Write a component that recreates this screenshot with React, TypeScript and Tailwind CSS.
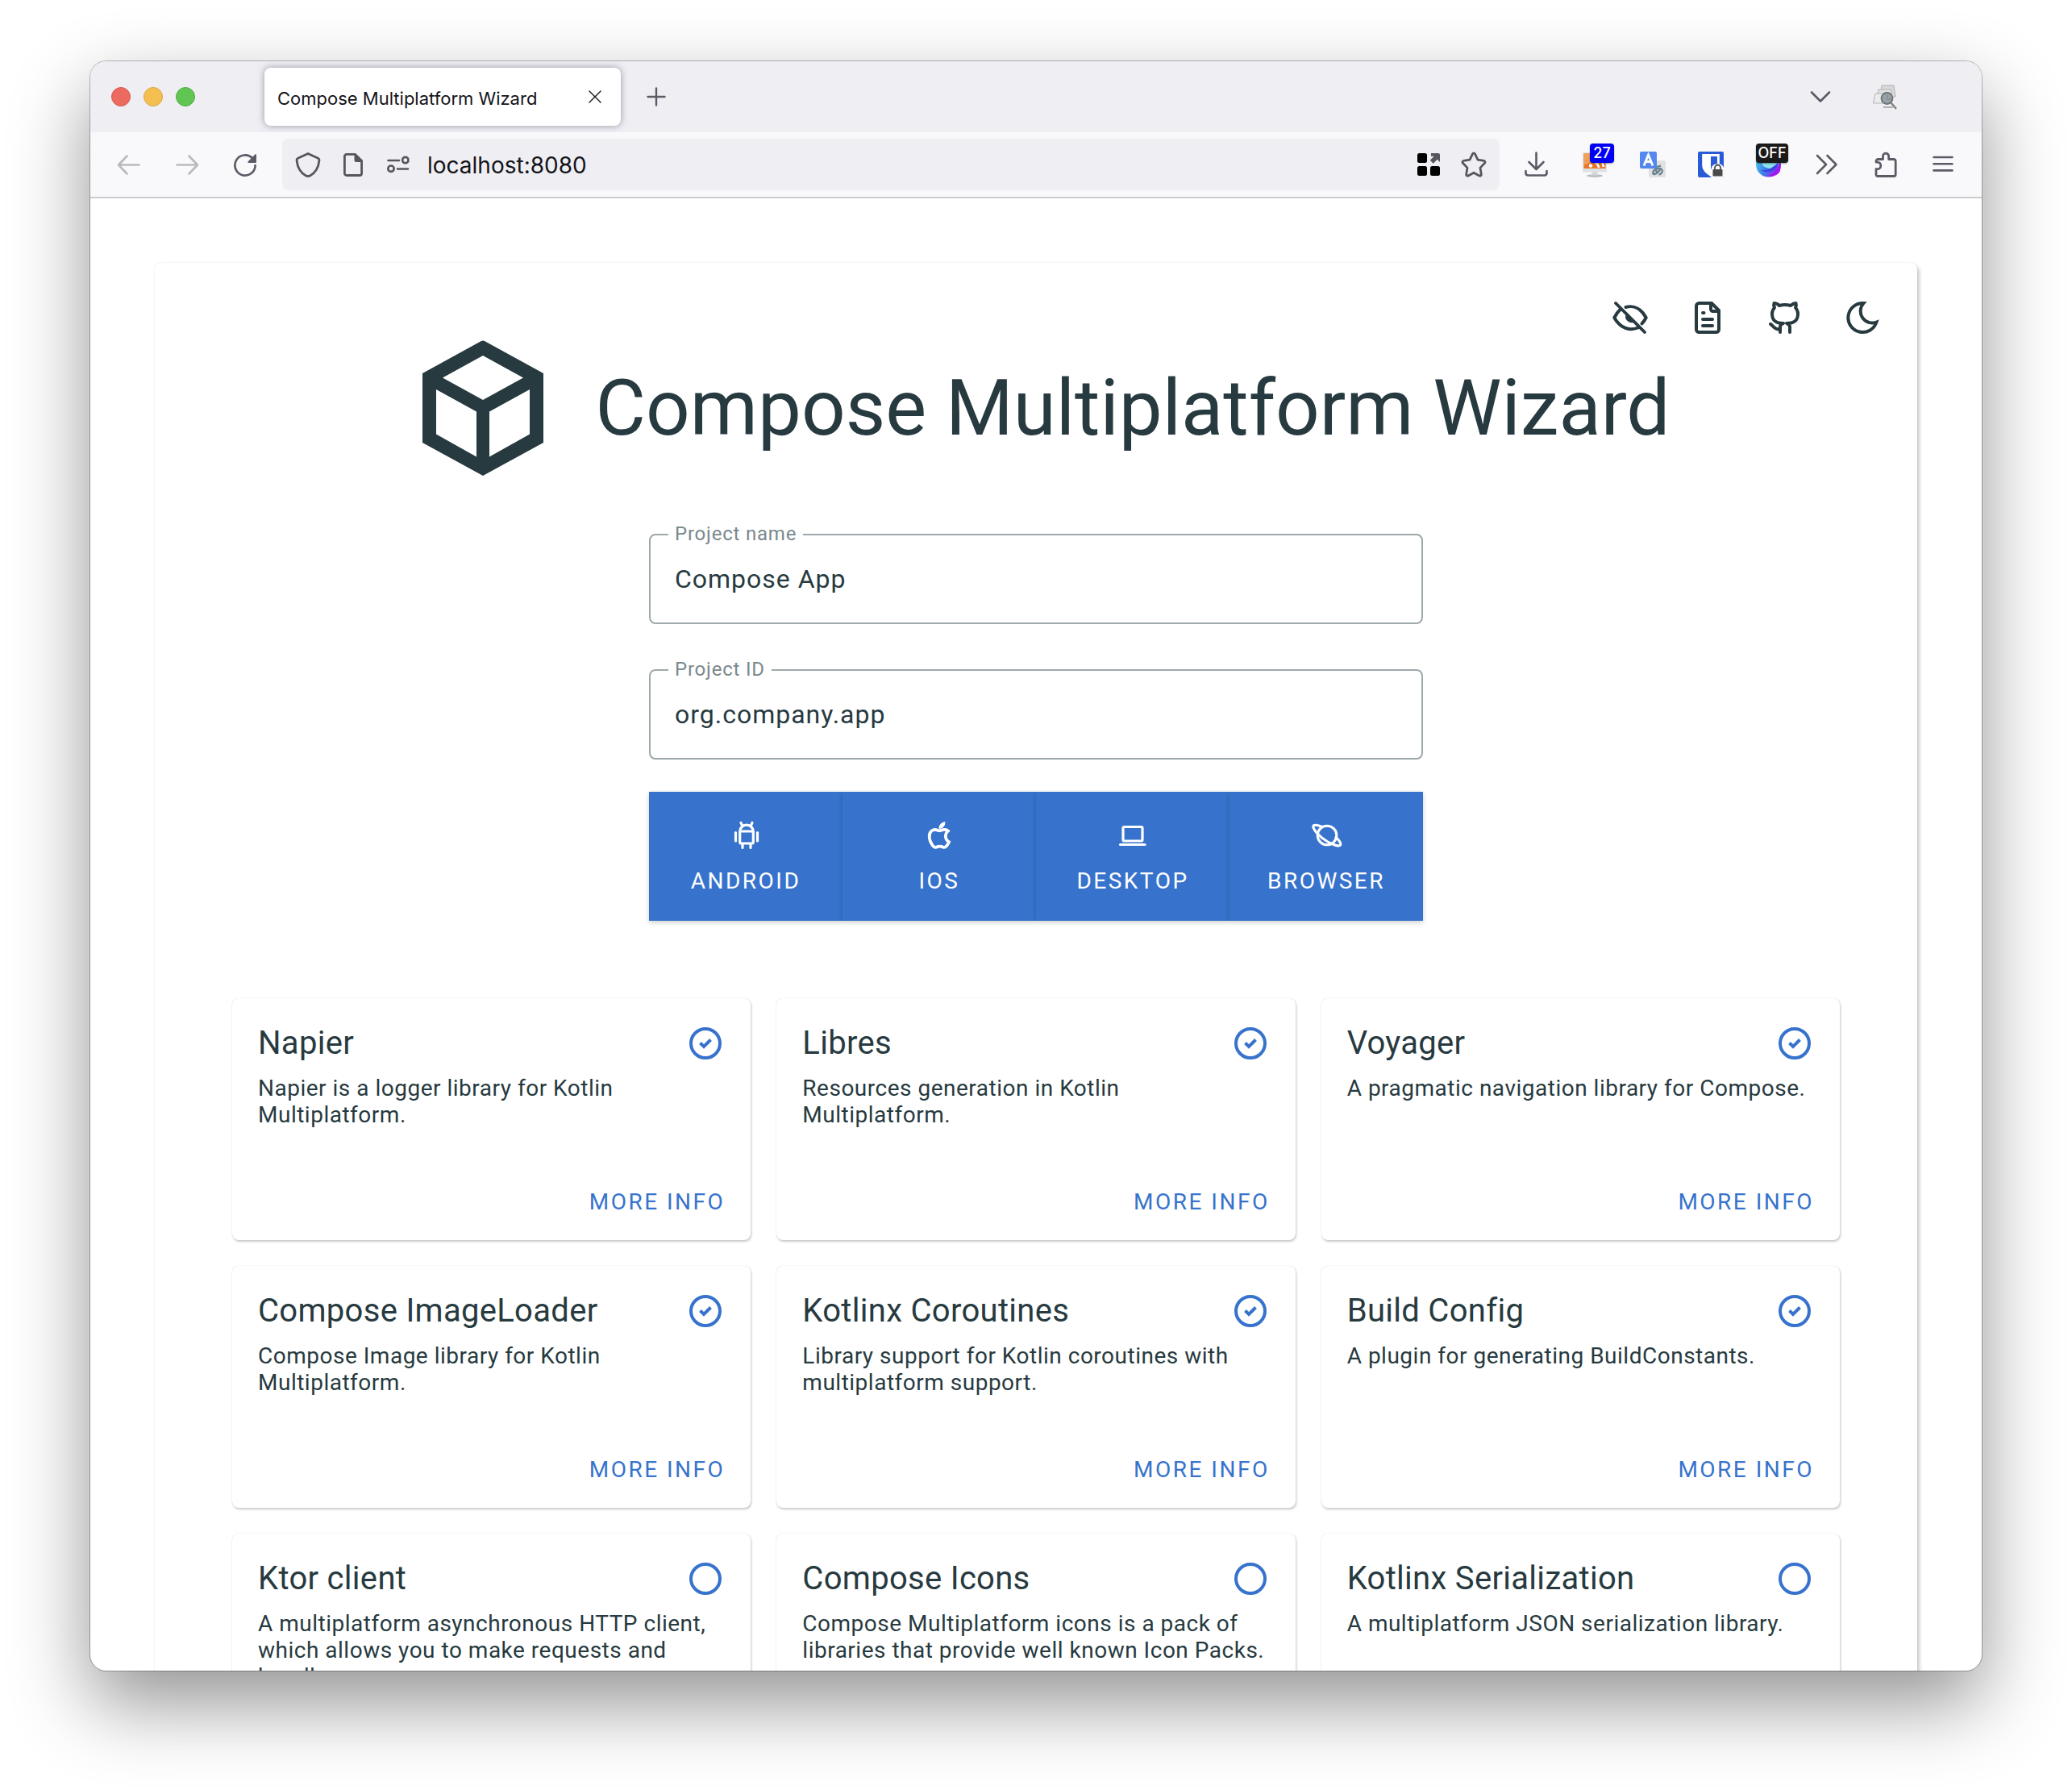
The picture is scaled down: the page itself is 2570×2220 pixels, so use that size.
import React, { useState } from "react";
import { AiOutlineApple } from "react-icons/ai";

type IconProps = { className?: string };

/* ---------- browser chrome icons ---------- */

function Stroke({ d, className = "size-8", width = 2.6 }: { d: string; className?: string; width?: number }) {
  return (
    <svg viewBox="0 0 32 32" className={className} fill="none" stroke="currentColor" strokeWidth={width} strokeLinecap="round" strokeLinejoin="round" aria-hidden="true">
      <path d={d} />
    </svg>
  );
}

const BackIcon = () => <Stroke d="M28.500 16.500H3M13.500 5.500 3 16.500l10.500 11" />;
const ForwardIcon = () => <Stroke d="M3.500 16.500H29M18.500 5.500l10.500 11-10.500 11" />;
const CloseIcon = () => <Stroke className="size-4" width={2.8} d="M2 2l28 28M30 2 2 30" />;
const PlusIcon = () => <Stroke className="size-6" width={3.2} d="M16 2v28M2 16h28" />;
const ChevronIcon = () => <Stroke d="M5 10.500l11 11 11-11" />;
const ShieldIcon = () => <Stroke width={2.8} d="M16 2.500 3.500 8.200c-1 .5-1.600 1.400-1.500 2.500C2.800 19 6 26 13.500 29.900c1.600.8 3.400.8 5 0C26 26 29.200 19 30 10.700c.1-1.100-.5-2-1.500-2.500Z" />;
const StarIcon = () => <Stroke width={2.8} d="M14.500 2.800c.6-1.200 2.400-1.200 3 0l3.500 7.400 7.600 1.200c1.400.2 1.900 1.900.9 2.900L24 20.100l1.300 8.200c.2 1.400-1.100 2.300-2.400 1.700L16 26.200 9.100 30c-1.200.6-2.600-.3-2.400-1.700L8 20.100l-5.500-5.800c-1-1-.5-2.700.9-2.900L11 10.200Z" />;
const DownloadIcon = () => <Stroke width={2.6} d="M15.500 1.500v20M6.500 13l9 9 9-9M2.500 24v2.500c0 1.700 1.300 3 3 3h20c1.700 0 3-1.300 3-3V24" />;
const MoreToolsIcon = () => <Stroke width={2.600} d="M4 5l11 11L4 27M16.500 5l11 11-11 11" />;
const MenuIcon = () => <Stroke width={2.6} d="M4.500 7h23M4.500 15.200h23M4.500 23.400h23" />;
const PuzzleIcon = () => <Stroke width={2.8} d="M5 28.500v-6.800h1.500a4.300 4.300 0 0 0 0-8.600H5V12a2.500 2.500 0 0 1 2.500-2.500h6V5.800a3.600 3.600 0 0 1 7.200 0v3.700h6A2.500 2.500 0 0 1 29.200 12v16.500a2 2 0 0 1-2 2H7a2 2 0 0 1-2-2Z" />;

function ReloadIcon() {
  return (
    <svg viewBox="0 0 32 32" className="size-8" aria-hidden="true">
      <path d="M25 8.200A12.600 12.600 0 1 0 28.600 17" fill="none" stroke="currentColor" strokeWidth="2.700" strokeLinecap="round" />
      <path d="M30 4.200V13a1 1 0 0 1-1 1h-8.600c-1 0-1.400-1-.7-1.700L28.300 3.500c.7-.7 1.700-.2 1.700.7Z" fill="currentColor" />
    </svg>
  );
}

function PageIcon() {
  return (
    <svg viewBox="0 0 32 32" className="size-8" aria-hidden="true">
      <path d="M8 3.400h10.500L26.600 11.500V27a2.500 2.500 0 0 1-2.500 2.500H8A2.500 2.500 0 0 1 5.400 27V6A2.500 2.500 0 0 1 8 3.400Z" fill="none" stroke="currentColor" strokeWidth="2.800" strokeLinejoin="round" />
      <path d="M17.500 2.500h1.600L28 11.400V13h-8a2.500 2.500 0 0 1-2.500-2.500Z" fill="currentColor" />
    </svg>
  );
}

function PermissionsIcon() {
  return (
    <svg viewBox="0 0 32 32" className="size-8" fill="none" stroke="currentColor" strokeWidth="2.600" strokeLinecap="round" aria-hidden="true">
      <path d="M3.500 11H17M15 21.500h13" />
      <circle cx="24.800" cy="10.600" r="3.700" />
      <circle cx="7" cy="21.200" r="3.700" />
    </svg>
  );
}

function GridIcon() {
  return (
    <svg viewBox="0 0 32 32" className="size-8" aria-hidden="true">
      <rect x="2" y="2" width="12" height="12" rx="2.500" fill="#000" />
      <rect x="2" y="18" width="12" height="12" rx="2.500" fill="#000" />
      <rect x="18" y="18" width="12" height="12" rx="2.500" fill="#000" />
      <path d="M19 2h9c1.100 0 2 .9 2 2v9l-3.300-3.300-5 5-3.900-3.900 5-5H19Z" fill="#57565d" />
    </svg>
  );
}

function TabsSearchIcon() {
  return (
    <svg viewBox="0 0 32 32" className="size-8" aria-hidden="true">
      <path d="M12 2h15l2 14H10Z" fill="#d9d9d9" stroke="#adadad" />
      <path d="M8 7h16l1 12H6Z" fill="#e0e0e0" stroke="#b3b3b3" />
      <path d="M4 12h17v12H1.500Z" fill="#ebebeb" stroke="#b3b3b3" />
      <path d="M14 28h12v2H14Z" fill="#b0b0b0" />
      <path d="m23 23 7 8" stroke="#7d7d72" strokeWidth="2.200" />
      <circle cx="18.500" cy="18" r="7" fill="#98a3a8" stroke="#6d7376" strokeWidth="1.800" />
      <path d="M19 14v5h5" fill="none" stroke="#818c91" strokeWidth="1.500" />
    </svg>
  );
}

function FeedMonitorIcon() {
  return (
    <svg viewBox="0 0 32 32" className="size-8" aria-hidden="true">
      <ellipse cx="16" cy="30" rx="10" ry="1.800" fill="#b9bcbe" />
      <path d="M13 24h6l1 5.500h-8Z" fill="#d3d6d8" />
      <rect x="1" y="1" width="30" height="24.500" rx="1" fill="#dfe2e4" />
      <rect x="2.500" y="2.500" width="27" height="18.500" fill="#e8772c" />
      <path d="M2.500 2.500h27V9q-14 1-27 8Z" fill="#f0a05a" />
      <g fill="none" stroke="#fff" strokeWidth="2.800">
        <path d="M13 12a9 9 0 0 1 8 8M17 7a14 14 0 0 1 10 12" />
      </g>
      <circle cx="11" cy="17.500" r="2.200" fill="#fff" />
    </svg>
  );
}

function TranslateIcon() {
  return (
    <svg viewBox="0 0 32 32" className="size-8" aria-hidden="true">
      <rect x="11" y="11" width="21" height="21" rx="2" fill="#e1e1e1" />
      <path d="M15 18.500q6 1 11-1M20 15q-1 7 1.500 12M26 20q-3 7-8 8-3 0-1-4 3-4 8-3 5 2 1.500 6-1 1.200-3 1.500" fill="none" stroke="#66808c" strokeWidth="2.300" />
      <rect x="0" y="0" width="21" height="21" rx="2" fill="#5588ee" />
      <path d="M5 17.500 10.500 4 16 17.500M7.200 12.500h6.600" fill="none" stroke="#fff" strokeWidth="2.800" />
    </svg>
  );
}

function VaultIcon() {
  return (
    <svg viewBox="0 0 32 32" className="size-8" aria-hidden="true">
      <rect width="32" height="32" rx="2" fill="#2a5bd7" />
      <path d="M5.200 3h21.600v16l-8 13h-1.300Q5.200 25 5.200 17.500Z" fill="#fff" />
      <path d="M16 6h8v12l-8 4Z" fill="#2a5bd7" />
      <path d="M16.500 32V22a8 7.500 0 0 1 15.500-2V30a2 2 0 0 1-2 2Z" fill="#f9f9fb" />
      <rect x="18.500" y="22" width="12" height="8.500" rx="1" fill="#4a4a4a" />
      <path d="M21 22v-2a3.500 3.500 0 0 1 7 0v2" fill="none" stroke="#4a4a4a" strokeWidth="1.800" />
    </svg>
  );
}

function GlobeIcon() {
  return (
    <svg viewBox="0 0 32 32" className="size-8" aria-hidden="true">
      <defs>
        <linearGradient id="globe" x1="0" y1="0.300" x2="1" y2="0.700">
          <stop offset="0" stopColor="#4cc9ee" />
          <stop offset="0.450" stopColor="#3d7ee8" />
          <stop offset="1" stopColor="#9a1cf0" />
        </linearGradient>
      </defs>
      <circle cx="15.500" cy="16" r="15.500" fill="url(#globe)" />
      <ellipse cx="18" cy="14" rx="10.500" ry="7" fill="#8be3ee" />
      <path d="M5 23q12 2 23-10-1 8-8 11T5 23Z" fill="#3a45e4" />
      <path d="M13 31q13-5 17-16 3 13-9 15.500Z" fill="#a316ee" />
    </svg>
  );
}

/* ---------- page icons ---------- */

function PageStroke({ children }: { children: React.ReactNode }) {
  return (
    <svg viewBox="0 0 48 40" className="h-10 w-12" fill="none" stroke="currentColor" strokeWidth="4" strokeLinecap="round" strokeLinejoin="round" aria-hidden="true">
      {children}
    </svg>
  );
}

function EyeOffIcon() {
  return (
    <PageStroke>
      <path d="M6 2 42 38" strokeWidth="3.800" />
      <path d="M18.500 7C29 4 38 9.500 43.700 20c-1.500 3-3.300 5.300-5.200 7.300" />
      <path d="M12 9.500Q7.500 13.500 4.300 20C11 32 22 37 33.500 32.500" />
      <path d="M20 15.500a6.500 6.500 0 0 0 8.500 9Z" fill="currentColor" strokeWidth="2" />
    </PageStroke>
  );
}

function FileIcon() {
  return (
    <PageStroke>
      <path d="M29 2H13.500A3.500 3.500 0 0 0 10 5.500v29a3.500 3.500 0 0 0 3.500 3.500h21a3.500 3.500 0 0 0 3.500-3.500V11Z" />
      <path d="M28 3v6.500a2.500 2.500 0 0 0 2.500 2.500H37" />
      <path d="M18 14h1.500M18 22h12M18 30h12" />
    </PageStroke>
  );
}

function GithubIcon() {
  return (
    <PageStroke>
      <path d="M22 27C13 27 8 24 8 15q0-4 3-7.500-1.500-3-.5-5.500 3.500 0 6.500 3 7-2 14 0 3.500-3 6.500-3 1 2.500-.5 5.500 3 3.500 3 7.500c0 9-5 12-14 12" strokeLinecap="butt" />
      <path d="M22 27q-4 1.500-4 4.500V38M26 27q4 1.500 4 4.500V38M6 28c3 1 4 7 12 6.500" />
    </PageStroke>
  );
}

function MoonIcon() {
  return (
    <PageStroke>
      <path d="M25.500 2A18 18 0 1 0 41.500 25.500A14.600 14.600 0 0 1 25.500 2Z" strokeLinejoin="miter" />
    </PageStroke>
  );
}

function CubeLogo() {
  return (
    <svg viewBox="0 0 150 168" className="h-[168px] w-[150px]" fill="currentColor" fillRule="evenodd" aria-hidden="true">
      <path d="M72 1.500q3-2 6 0L150 41v86l-75 41L0 127V41ZM75 19 25 46.500 75 74l50-27.500ZM17 61v55.500l50 28v-56ZM133 61v55.500l-50 28v-56Z" />
    </svg>
  );
}

function AndroidIcon() {
  return (
    <svg viewBox="0 0 40 40" className="size-10" fill="none" stroke="currentColor" strokeWidth="3.200" strokeLinecap="round" strokeLinejoin="round" aria-hidden="true">
      <path d="M12.700 15a8.300 7.800 0 0 1 16.600 0v13.500a1.500 1.500 0 0 1-1.500 1.500H14.200a1.500 1.500 0 0 1-1.500-1.500ZM12.700 15h16.600" />
      <path d="M7.500 16.500v10.500M34.500 16.500v10.500M16 31v4.500M26 31v4.500M14 4.500l1.500 3M28 4.500l-1.500 3" />
    </svg>
  );
}

const AppleIcon = () => <AiOutlineApple className="size-10 stroke-[28px]" aria-hidden="true" />;

function LaptopIcon() {
  return (
    <svg viewBox="0 0 40 40" className="size-10" fill="none" stroke="currentColor" strokeWidth="3.200" strokeLinecap="round" strokeLinejoin="round" aria-hidden="true">
      <rect x="8" y="9.500" width="24" height="17.500" rx="1.500" />
      <path d="M4.500 31.500h30.500" />
    </svg>
  );
}

function PlanetIcon() {
  return (
    <svg viewBox="0 0 40 40" className="size-10" fill="none" stroke="currentColor" strokeWidth="3.100" strokeLinejoin="round" strokeLinecap="round" aria-hidden="true">
      <circle cx="21" cy="20" r="11.800" />
      <path d="M15 9.500C9 7 4.500 6.500 4 8.500 3 12.500 12 22 21 27.500c8 5 15.500 6.500 16.500 4.500 1-1.800-1.200-5.500-5.500-9.500" />
    </svg>
  );
}

function ToggleIcon({ checked }: { checked: boolean }) {
  return (
    <svg viewBox="0 0 40 40" className="size-10" fill="none" stroke="currentColor" strokeWidth="4" aria-hidden="true">
      <circle cx="20" cy="20" r="18" />
      {checked && <path d="M13.500 19.500 18 24l8.500-8.500" />}
    </svg>
  );
}

/* ---------- browser chrome ---------- */

function ToolButton({ label, children, className = "w-18" }: IconProps & { label: string; children: React.ReactNode }) {
  return (
    <button type="button" aria-label={label} className={`${className} flex h-16 shrink-0 items-center justify-center`}>
      {children}
    </button>
  );
}

function TabBar() {
  return (
    <div className="flex h-22 shrink-0 items-center bg-[#efeef3] pl-[26px] pr-21">
      <div className="flex gap-4">
        <span className="size-6 rounded-full border border-[#d45a50] bg-[#ec6a5f]" />
        <span className="size-6 rounded-full border border-[#d9a441] bg-[#f4bf50]" />
        <span className="size-6 rounded-full border border-[#51ac44] bg-[#61c554]" />
      </div>
      <div className="ml-[86px] flex h-18 w-[442px] items-center rounded-lg bg-white pl-4 pr-6 shadow-[0_0_8px_rgba(90,90,110,0.6)]">
        <span className="flex-1 pt-1 font-[Inter] text-[22px] leading-8 text-[#15141a]">Compose Multiplatform Wizard</span>
        <button type="button" aria-label="Close tab" className="text-[#15141a]">
          <CloseIcon />
        </button>
      </div>
      <button type="button" aria-label="New tab" className="ml-8 text-[#5b5b66]">
        <PlusIcon />
      </button>
      <div className="ml-auto flex items-center gap-12 text-[#5b5b66]">
        <button type="button" aria-label="List all tabs">
          <ChevronIcon />
        </button>
        <button type="button" aria-label="Search tabs" className="mr-5">
          <TabsSearchIcon />
        </button>
      </div>
    </div>
  );
}

function Badge({ text, className }: { text: string; className: string }) {
  return (
    <span className={`${className} absolute flex h-6 items-center justify-center rounded font-[Inter] text-[18px] font-medium leading-6 text-white shadow-[0_1px_2px_rgba(0,0,0,0.4)]`}>
      {text}
    </span>
  );
}

function Toolbar() {
  return (
    <div className="flex shrink-0 items-center border-b-2 border-[#cccccd] bg-[#f9f9fb] px-3 py-2 text-[#5b5b66]">
      <div className="flex text-[#b9b9bf]">
        <ToolButton label="Back">
          <BackIcon />
        </ToolButton>
        <ToolButton label="Forward">
          <ForwardIcon />
        </ToolButton>
      </div>
      <ToolButton label="Reload">
        <ReloadIcon />
      </ToolButton>
      <div className="mx-2.5 flex h-16 min-w-0 flex-1 items-center rounded-lg bg-[#efeef3] px-1 text-[#57565d]">
        <ToolButton label="Tracking protection" className="w-14">
          <ShieldIcon />
        </ToolButton>
        <ToolButton label="Site information" className="w-14">
          <PageIcon />
        </ToolButton>
        <ToolButton label="Permissions" className="w-14">
          <PermissionsIcon />
        </ToolButton>
        <input
          aria-label="Address"
          defaultValue="localhost:8080"
          className="min-w-0 flex-1 bg-transparent pt-0.5 pl-2 font-[Inter] text-[28px] leading-10 text-[#15141a] outline-none"
        />
        <ToolButton label="Page shortcuts" className="w-14">
          <GridIcon />
        </ToolButton>
        <ToolButton label="Bookmark this page" className="w-14">
          <StarIcon />
        </ToolButton>
      </div>
      <ToolButton label="Downloads">
        <DownloadIcon />
      </ToolButton>
      <ToolButton label="Feed reader">
        <span className="relative">
          <FeedMonitorIcon />
          <Badge text="27" className="-top-2.5 left-2.5 w-[30px] bg-[#0000f5]" />
        </span>
      </ToolButton>
      <ToolButton label="Translate">
        <TranslateIcon />
      </ToolButton>
      <ToolButton label="Password vault">
        <VaultIcon />
      </ToolButton>
      <ToolButton label="Filter, off">
        <span className="relative">
          <GlobeIcon />
          <Badge text="OFF" className="-top-2.5 left-0 w-10 bg-[#1a1a1a]" />
        </span>
      </ToolButton>
      <ToolButton label="More tools">
        <MoreToolsIcon />
      </ToolButton>
      <ToolButton label="Extensions">
        <PuzzleIcon />
      </ToolButton>
      <ToolButton label="Menu">
        <MenuIcon />
      </ToolButton>
    </div>
  );
}

/* ---------- wizard page ---------- */

function TextField({ id, label, value }: { id: string; label: string; value: string }) {
  return (
    <div className="relative">
      <label htmlFor={id} className="absolute -top-4 left-6 bg-white px-2 text-2xl tracking-[0.033em] text-[#7a898c]">
        {label}
      </label>
      <input
        id={id}
        defaultValue={value}
        className="h-28 w-full rounded-lg border-2 border-[#9ea9ab] bg-transparent px-[30px] text-[32px] leading-10 tracking-[0.031em] text-[#273a40] outline-none"
      />
    </div>
  );
}

const platforms = [
  { name: "Android", Icon: AndroidIcon },
  { name: "iOS", Icon: AppleIcon },
  { name: "Desktop", Icon: LaptopIcon },
  { name: "Browser", Icon: PlanetIcon },
];

const libraries = [
  { name: "Napier", text: "Napier is a logger library for Kotlin Multiplatform.", on: true },
  { name: "Libres", text: "Resources generation in Kotlin Multiplatform.", on: true },
  { name: "Voyager", text: "A pragmatic navigation library for Compose.", on: true },
  { name: "Compose ImageLoader", text: "Compose Image library for Kotlin Multiplatform.", on: true },
  { name: "Kotlinx Coroutines", text: "Library support for Kotlin coroutines with multiplatform support.", on: true },
  { name: "Build Config", text: "A plugin for generating BuildConstants.", on: true },
  { name: "Ktor client", text: "A multiplatform asynchronous HTTP client, which allows you to make requests and handle responses.", on: false },
  { name: "Compose Icons", text: "Compose Multiplatform icons is a pack of libraries that provide well known Icon Packs.", on: false },
  { name: "Kotlinx Serialization", text: "A multiplatform JSON serialization library.", on: false },
];

function LibraryCard({ name, text, on }: { name: string; text: string; on: boolean }) {
  const [checked, setChecked] = useState(on);
  return (
    <article className="flex min-h-[300px] flex-col rounded-lg bg-white p-8 pb-[31px] shadow-[0_0_1px_rgba(0,0,0,0.2),1px_2px_3px_rgba(0,0,0,0.2)]">
      <div className="flex items-center justify-between pr-1">
        <h2 className="text-[40px] leading-[47px] tracking-[0.0075em]">{name}</h2>
        <label className="cursor-pointer text-[#3773cc]">
          <input type="checkbox" aria-label={name} checked={checked} onChange={() => setChecked(!checked)} className="sr-only" />
          <ToggleIcon checked={checked} />
        </label>
      </div>
      <p className="mt-4 text-[28px] leading-[33px] tracking-[0.018em]">{text}</p>
      <a href="#" className="mt-auto self-end text-[28px] leading-[33px] tracking-[0.089em] text-[#3773cc]">
        MORE INFO
      </a>
    </article>
  );
}

function Wizard() {
  return (
    <main className="mx-20 mt-20 rounded-lg bg-white px-24 pb-24 text-[#273a40] shadow-[0_0_2px_rgba(0,0,0,0.12),3px_4px_4px_rgba(0,0,0,0.2)]">
      <nav className="-mr-[52px] flex justify-end gap-12 pt-12">
        <button type="button" aria-label="Hide preview">
          <EyeOffIcon />
        </button>
        <a href="#" aria-label="Documentation">
          <FileIcon />
        </a>
        <a href="#" aria-label="GitHub">
          <GithubIcon />
        </a>
        <button type="button" aria-label="Dark theme">
          <MoonIcon />
        </button>
      </nav>
      <header className="mt-2 flex items-center justify-center gap-10">
        <span className="flex w-[200px] justify-center">
          <CubeLogo />
        </span>
        <h1 className="text-8xl">Compose Multiplatform Wizard</h1>
      </header>
      <form className="mx-auto mt-18 w-full max-w-[960px]">
        <div className="flex flex-col gap-14">
          <TextField id="project-name" label="Project name" value="Compose App" />
          <TextField id="project-id" label="Project ID" value="org.company.app" />
        </div>
        <div className="mt-10 grid grid-cols-4">
          {platforms.map(({ name, Icon }) => (
            <button
              key={name}
              type="button"
              className="flex h-40 flex-col items-center justify-center gap-5 bg-[#3773cc] text-[28px] leading-[33px] tracking-[0.089em] text-white uppercase shadow-[0_2px_6px_rgba(0,0,0,0.2)]"
            >
              <Icon />
              {name}
            </button>
          ))}
        </div>
      </form>
      <section className="mt-24 grid grid-cols-3 gap-8">
        {libraries.map((library) => (
          <LibraryCard key={library.name} {...library} />
        ))}
      </section>
    </main>
  );
}

export default function App() {
  return (
    <div className="flex h-screen flex-col bg-white px-28 pt-19 pb-37 font-[Roboto,sans-serif]">
      <div className="flex min-h-0 flex-1 flex-col overflow-hidden rounded-[20px] bg-white shadow-[0_0_0_1px_rgba(0,0,0,0.26),0_40px_96px_rgba(0,0,0,0.43)]">
        <TabBar />
        <Toolbar />
        <div className="min-h-0 flex-1 overflow-y-auto [scrollbar-width:none]">
          <Wizard />
        </div>
      </div>
    </div>
  );
}
